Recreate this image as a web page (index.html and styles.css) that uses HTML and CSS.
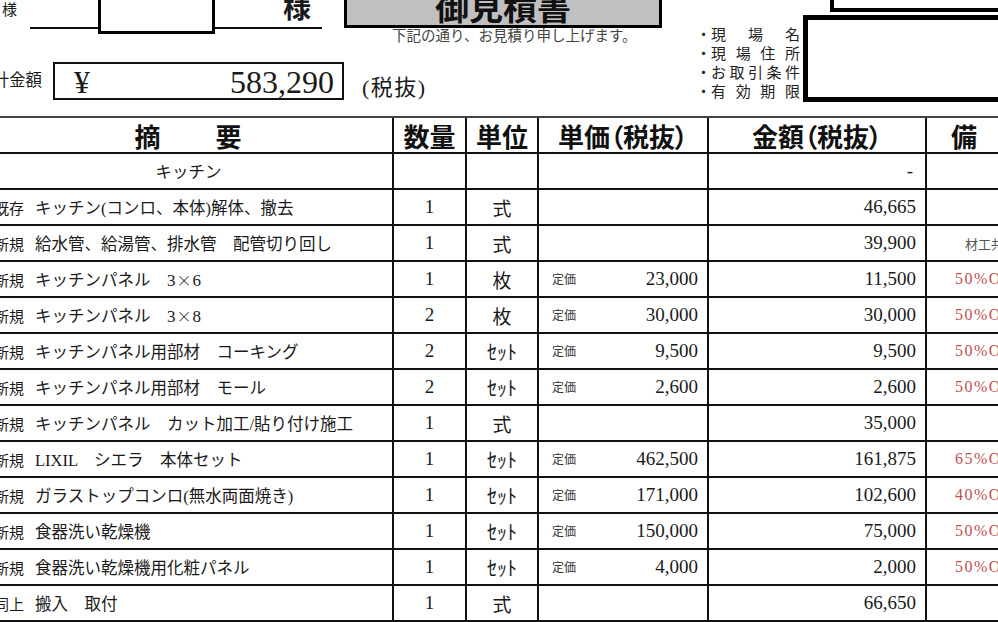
FILE: index.html
```html
<!DOCTYPE html>
<html lang="ja">
<head>
<meta charset="utf-8">
<title>御見積書</title>
<link rel="stylesheet" href="styles.css">
</head>
<body>
<div class="page">
  <header class="head">
    <div class="head-left">
      <div class="name-row">
        <span class="sama-s">様</span>
        <div class="name-field">
          <div class="name-box"></div>
          <span class="sama-b">様</span>
        </div>
        <div class="title-col">
          <div class="title-box"><h1 class="title">御見積書</h1></div>
          <p class="subtitle">下記の通り、お見積り申し上げます。</p>
        </div>
      </div>
      <div class="total-row">
        <span class="total-label">合計金額</span>
        <div class="total-box"><span class="yen">¥</span><span class="total-num">583,290</span></div>
        <span class="tax">(税抜)</span>
      </div>
    </div>
    <div class="head-right">
      <div class="rtop"></div>
      <div class="info">
        <ul class="labels">
          <li><span class="dot">・</span><span class="jt">現　場　名</span></li>
          <li><span class="dot">・</span><span class="jt">現場住所</span></li>
          <li><span class="dot">・</span><span class="jt">お取引条件</span></li>
          <li><span class="dot">・</span><span class="jt">有効期限</span></li>
        </ul>
        <div class="rbox"></div>
      </div>
    </div>
  </header>

  <div class="sheet">
    <div class="c h h0">摘　　要</div>
    <div class="c h">数量</div>
    <div class="c h">単位</div>
    <div class="c h hp">単価（税抜）</div>
    <div class="c h hp">金額（税抜）</div>
    <div class="c h h5">備　考</div>

    <div class="c cat">キッチン</div>
    <div class="c q"></div>
    <div class="c u"></div>
    <div class="c p"></div>
    <div class="c a"><span class="dash">-</span></div>
    <div class="c r"></div>

    <div class="c d0"><span class="pre">既存</span><span class="desc">キッチン(コンロ、本体)解体、撤去</span></div>
    <div class="c q">1</div>
    <div class="c u">式</div>
    <div class="c p"></div>
    <div class="c a">46,665</div>
    <div class="c r"></div>

    <div class="c d0"><span class="pre">新規</span><span class="desc">給水管、給湯管、排水管　配管切り回し</span></div>
    <div class="c q">1</div>
    <div class="c u">式</div>
    <div class="c p"></div>
    <div class="c a">39,900</div>
    <div class="c r gray">材工共</div>

    <div class="c d0"><span class="pre">新規</span><span class="desc">キッチンパネル　<span class="size">3<span class="x">×</span>6</span></span></div>
    <div class="c q">1</div>
    <div class="c u">枚</div>
    <div class="c p"><span class="lab">定価</span><span class="num">23,000</span></div>
    <div class="c a">11,500</div>
    <div class="c r">50%OFF</div>

    <div class="c d0"><span class="pre">新規</span><span class="desc">キッチンパネル　<span class="size">3<span class="x">×</span>8</span></span></div>
    <div class="c q">2</div>
    <div class="c u">枚</div>
    <div class="c p"><span class="lab">定価</span><span class="num">30,000</span></div>
    <div class="c a">30,000</div>
    <div class="c r">50%OFF</div>

    <div class="c d0"><span class="pre">新規</span><span class="desc">キッチンパネル用部材　コーキング</span></div>
    <div class="c q">2</div>
    <div class="c u uk">ｾｯﾄ</div>
    <div class="c p"><span class="lab">定価</span><span class="num">9,500</span></div>
    <div class="c a">9,500</div>
    <div class="c r">50%OFF</div>

    <div class="c d0"><span class="pre">新規</span><span class="desc">キッチンパネル用部材　モール</span></div>
    <div class="c q">2</div>
    <div class="c u uk">ｾｯﾄ</div>
    <div class="c p"><span class="lab">定価</span><span class="num">2,600</span></div>
    <div class="c a">2,600</div>
    <div class="c r">50%OFF</div>

    <div class="c d0"><span class="pre">新規</span><span class="desc">キッチンパネル　カット加工/貼り付け施工</span></div>
    <div class="c q">1</div>
    <div class="c u">式</div>
    <div class="c p"></div>
    <div class="c a">35,000</div>
    <div class="c r"></div>

    <div class="c d0"><span class="pre">新規</span><span class="desc">LIXIL　シエラ　本体セット</span></div>
    <div class="c q">1</div>
    <div class="c u uk">ｾｯﾄ</div>
    <div class="c p"><span class="lab">定価</span><span class="num">462,500</span></div>
    <div class="c a">161,875</div>
    <div class="c r">65%OFF</div>

    <div class="c d0"><span class="pre">新規</span><span class="desc">ガラストップコンロ(無水両面焼き)</span></div>
    <div class="c q">1</div>
    <div class="c u uk">ｾｯﾄ</div>
    <div class="c p"><span class="lab">定価</span><span class="num">171,000</span></div>
    <div class="c a">102,600</div>
    <div class="c r">40%OFF</div>

    <div class="c d0"><span class="pre">新規</span><span class="desc">食器洗い乾燥機</span></div>
    <div class="c q">1</div>
    <div class="c u uk">ｾｯﾄ</div>
    <div class="c p"><span class="lab">定価</span><span class="num">150,000</span></div>
    <div class="c a">75,000</div>
    <div class="c r">50%OFF</div>

    <div class="c d0"><span class="pre">新規</span><span class="desc">食器洗い乾燥機用化粧パネル</span></div>
    <div class="c q">1</div>
    <div class="c u uk">ｾｯﾄ</div>
    <div class="c p"><span class="lab">定価</span><span class="num">4,000</span></div>
    <div class="c a">2,000</div>
    <div class="c r">50%OFF</div>

    <div class="c d0"><span class="pre">同上</span><span class="desc">搬入　取付</span></div>
    <div class="c q">1</div>
    <div class="c u">式</div>
    <div class="c p"></div>
    <div class="c a">66,650</div>
    <div class="c r"></div>
  </div>
</div>
</body>
</html>
```

FILE: styles.css
```css
html, body {
  margin: 0;
  padding: 0;
  background: #fff;
  overflow: hidden;
}

body {
  width: 998px;
  height: 622px;
  font-family: "Liberation Serif", "Noto Sans CJK JP", serif;
  color: #1a1a1a;
}

.page {
  width: 998px;
  height: 622px;
  overflow: hidden;
}

/* ---------- header area ---------- */
.head {
  display: flex;
  height: 116px;
}

.head-left {
  width: 690px;
  flex: none;
}

.name-row {
  display: flex;
  align-items: flex-start;
  height: 45px;
}

.sama-s {
  width: 28px;
  padding-left: 2px;
  flex: none;
  font-size: 15px;
  line-height: 20px;
}

.name-field {
  width: 292px;
  height: 27px;
  flex: none;
  display: flex;
  align-items: flex-start;
  border-bottom: 2px solid #111;
}

.name-box {
  flex: none;
  margin-left: 68px;
  margin-top: -10px;
  width: 117px;
  height: 44px;
  box-sizing: border-box;
  border: 3px solid #000;
  background: #fff;
}

.sama-b {
  margin-left: 68px;
  margin-top: -5px;
  font-size: 28px;
  line-height: 28px;
  font-weight: 700;
}

.title-col {
  margin-left: 22px;
  width: 318px;
  flex: none;
}

.title-box {
  margin-top: -12px;
  height: 40px;
  box-sizing: border-box;
  border: 3px solid #000;
  background: #c0c0c0;
  display: flex;
  justify-content: center;
  align-items: flex-end;
}

.title {
  margin: 0 0 -1px;
  font-size: 34px;
  line-height: 34px;
  font-weight: 700;
  color: #111;
}

.subtitle {
  margin: 0;
  padding-left: 48px;
  font-size: 14.5px;
  line-height: 16px;
  color: #444;
  white-space: nowrap;
}

.total-row {
  display: flex;
  align-items: center;
  margin-top: 17px;
  height: 38px;
}

.total-label {
  flex: none;
  margin-left: -24px;
  width: 66px;
  font-size: 16.5px;
  line-height: 20px;
  white-space: nowrap;
}

.total-box {
  flex: none;
  margin-left: 11px;
  width: 291px;
  height: 38px;
  box-sizing: border-box;
  border: 2px solid #111;
  display: flex;
  align-items: center;
  justify-content: space-between;
  padding: 1px 8px 0 19px;
}

.yen,
.total-num {
  font-size: 32px;
  line-height: 34px;
}

.tax {
  align-self: flex-start;
  margin-top: 13px;
  margin-left: 18px;
  font-size: 22px;
  line-height: 25px;
  letter-spacing: 1.5px;
}

.head-right {
  flex: 1;
  min-width: 0;
}

.rtop {
  margin-left: 140px;
  margin-top: -10px;
  width: 200px;
  height: 22px;
  box-sizing: border-box;
  border: 4px solid #000;
}

.info {
  display: flex;
  margin-top: 3px;
}

.labels {
  list-style: none;
  margin: 0;
  padding: 11px 0 0 6px;
  width: 107px;
  flex: none;
  font-size: 15px;
  line-height: 19px;
  color: #222;
}

.labels li {
  display: flex;
}

.dot {
  width: 15px;
  flex: none;
}

.jt {
  width: 89px;
  text-align: justify;
  text-align-last: justify;
}

.rbox {
  flex: none;
  width: 220px;
  height: 87px;
  box-sizing: border-box;
  border: 5px solid #000;
}

/* ---------- sheet ---------- */
.sheet {
  display: grid;
  grid-template-columns: 409px 73px 72px 170px 218px 200px;
  grid-auto-rows: 36px;
  margin-left: -15px;
  width: max-content;
  border-top: 2px solid #444;
}

.c {
  box-sizing: border-box;
  border-right: 2px solid #111;
  border-bottom: 2px solid #111;
  display: flex;
  align-items: center;
  overflow: hidden;
  white-space: nowrap;
}

.h {
  justify-content: center;
  font-size: 26px;
  font-weight: 700;
  color: #111;
}

.h0 {
  letter-spacing: 1px;
}

.hp {
  font-feature-settings: "palt";
}

.h5 {
  justify-content: flex-start;
  padding-left: 24px;
}

.d0 {
  padding-left: 9px;
}

.pre {
  flex: none;
  width: 41px;
  font-size: 15px;
}

.desc {
  font-size: 16.5px;
}

.size {
  font-size: 17px;
}

.x {
  font-family: "Noto Sans CJK JP", sans-serif;
  font-size: 15px;
  font-weight: 300;
  margin: 0 1px;
}

.cat {
  justify-content: center;
  font-size: 16.5px;
}

.q,
.u {
  justify-content: center;
  font-size: 19px;
}

.uk {
  font-size: 20px;
}

.p {
  justify-content: space-between;
  padding: 0 9px 0 13px;
}

.lab {
  font-size: 12px;
  color: #333;
}

.num,
.a {
  font-size: 19px;
}

.a {
  justify-content: flex-end;
  padding-right: 9px;
}

.dash {
  margin-right: 3px;
}

.r {
  padding-left: 28px;
  font-size: 16px;
  letter-spacing: 1.5px;
  color: #c0504d;
}

.r.gray {
  padding-left: 38px;
  font-size: 13px;
  letter-spacing: 0;
  color: #555;
}
```
